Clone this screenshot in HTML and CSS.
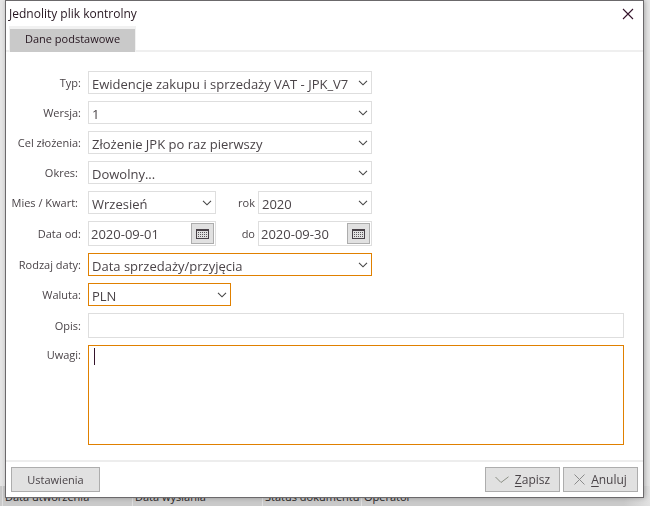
FILE: index.html
```html
<!DOCTYPE html>
<html lang="pl">
<head>
<meta charset="utf-8">
<title>Jednolity plik kontrolny</title>
<link rel="stylesheet" href="styles.css">
</head>
<body>
<svg class="defs" aria-hidden="true">
  <symbol id="chevron" viewBox="0 0 10 6"><path d="M1 .8 5 4.8 9 .8" fill="none" stroke="#454545" stroke-width="1.1"/></symbol>
  <symbol id="calendar" viewBox="0 0 13 10">
    <path fill="#494248" fill-rule="evenodd" d="M0 0H13V10H0ZM1 2V9H12V2Z"/>
    <path stroke="#5d585c" stroke-dasharray="1 1" d="M2 3.5H11M2 5.5H11M2 7.5H11"/>
  </symbol>
</svg>

<div class="backdrop">
  <div class="list-head">
    <span>Data utworzenia</span><span>Data wysłania</span><span>Status dokumentu</span><span>Operator</span>
  </div>
</div>

<form class="dialog" role="dialog" aria-labelledby="title">
  <header class="titlebar">
    <h1 id="title">Jednolity plik kontrolny</h1>
    <button class="close" type="button" aria-label="Zamknij">
      <svg width="12" height="12" viewBox="0 0 12 12"><path d="M1 1 11 11M11 1 1 11" stroke="#35142b" stroke-width="1.1"/></svg>
    </button>
  </header>
  <nav class="tabs"><button class="tab" type="button">Dane podstawowe</button></nav>

  <div class="fields">
    <label for="typ">Typ:</label>
    <div class="select wide"><select id="typ"><option>Ewidencje zakupu i sprzedaży VAT - JPK_V7</option></select><svg><use href="#chevron"/></svg></div>

    <label for="wersja">Wersja:</label>
    <div class="select wide"><select id="wersja"><option>1</option></select><svg><use href="#chevron"/></svg></div>

    <label for="cel">Cel złożenia:</label>
    <div class="select wide"><select id="cel"><option>Złożenie JPK po raz pierwszy</option></select><svg><use href="#chevron"/></svg></div>

    <label class="inset" for="okres">Okres:</label>
    <div class="select wide"><select id="okres"><option>Dowolny...</option></select><svg><use href="#chevron"/></svg></div>

    <label class="inset" for="mies">Mies / Kwart:</label>
    <div class="pair wide">
      <div class="select"><select id="mies"><option>Wrzesień</option></select><svg><use href="#chevron"/></svg></div>
      <label class="inset" for="rok">rok</label>
      <div class="select"><select id="rok"><option>2020</option></select><svg><use href="#chevron"/></svg></div>
    </div>

    <label for="od">Data od:</label>
    <div class="pair wide">
      <div class="date"><input id="od" type="text" value="2020-09-01"><button type="button" aria-label="Wybierz datę od"><svg><use href="#calendar"/></svg></button></div>
      <label class="inset" for="do">do</label>
      <div class="date"><input id="do" type="text" value="2020-09-30"><button type="button" aria-label="Wybierz datę do"><svg><use href="#calendar"/></svg></button></div>
    </div>

    <label for="rodzaj">Rodzaj daty:</label>
    <div class="select wide required"><select id="rodzaj"><option>Data sprzedaży/przyjęcia</option></select><svg><use href="#chevron"/></svg></div>

    <label for="waluta">Waluta:</label>
    <div class="select short required"><select id="waluta"><option>PLN</option></select><svg><use href="#chevron"/></svg></div>

    <label for="opis">Opis:</label>
    <input id="opis" class="text" type="text">

    <label class="top" for="uwagi">Uwagi:</label>
    <div class="notes required"><textarea id="uwagi"></textarea><span class="caret"></span></div>
  </div>

  <footer class="actions">
    <button class="btn settings" type="button">Ustawienia</button>
    <button class="btn" type="submit"><svg width="14" height="8" viewBox="0 0 14 8"><path d="M.5 1 6 6.5 13.5 .8" fill="none" stroke="#8b8f85"/></svg><span><u>Z</u>apisz</span></button>
    <button class="btn" type="button"><svg width="11" height="11" viewBox="0 0 11 11"><path d="M.5 .5 10.5 10.5M10.5 .5 .5 10.5" stroke="#8b8b8b"/></svg><span><u>A</u>nuluj</span></button>
  </footer>
</form>
</body>
</html>
```
FILE: styles.css
```css
* { box-sizing: border-box; }

body {
  margin: 0;
  background: #e6e6e6;
  color: #4a4448;
  font: 12px/16px "Open Sans", "Noto Sans", sans-serif;
}

button, input, select, textarea { font: inherit; color: inherit; }

.defs { position: absolute; width: 0; height: 0; }

/* Document list behind the dialog */
.backdrop {
  position: fixed;
  inset: 0;
  display: flex;
  flex-direction: column;
  justify-content: flex-end;
}

.list-head {
  display: grid;
  grid-template-columns: 130px 130px 99px 1fr;
  height: 20px;
  padding-left: 2px;
  background: linear-gradient(90deg, #cacaca 96%, #e2e2e2);
  font-size: 11px;
  line-height: 22px;
  color: #2c2828;
  white-space: nowrap;
}

.list-head span {
  padding-left: 2px;
  border-left: 1px solid #dedede;
}

.dialog {
  position: relative;
  display: flex;
  flex-direction: column;
  min-height: calc(100vh - 8px);
  margin: 0 6px 8px 5px;
  border: 1px solid #6b696b;
  background: #fff;
  box-shadow: 1px 0 5px #0004;
}

.titlebar {
  display: flex;
  align-items: center;
  justify-content: space-between;
  height: 25px;
  padding: 0 9px 0 3px;
  color: #25151f;
}

.titlebar h1 { margin: 0; font-size: 12px; font-weight: 400; }

.close {
  display: flex;
  padding: 0;
  border: 0;
  background: none;
}

.tabs {
  display: flex;
  height: 26px;
  padding-left: 3px;
  border-bottom: 2px solid #efefef;
}

.tab {
  height: 26px;
  padding: 0 15px 3px;
  border: 1px solid #f1f1f1;
  border-top-width: 3px;
  border-bottom: 0;
  background: #c9c9c9;
  color: #25151f;
  font-size: 11px;
}

.fields {
  display: grid;
  grid-template-columns: 75px 1fr;
  gap: 7px;
  align-items: center;
  padding: 19px 19px 14px 0;
}

.fields label {
  font-size: 11px;
  text-align: right;
  white-space: nowrap;
}

.fields .inset { padding-right: 3px; }
.fields .top { align-self: start; padding-top: 2px; }

.wide { width: 284px; }
.short { width: 143px; }

.select, .date, .text, .notes {
  border: 1px solid #dedede;
  background: #fff;
  font-size: 13px;
}

.select { position: relative; height: 23px; }

.fields .required { border-color: #e08000; }

.select select {
  display: block;
  width: 100%;
  height: 21px;
  padding: 2px 20px 0 3px;
  border: 0;
  outline: 0;
  appearance: none;
  background: none;
}

.select svg {
  position: absolute;
  top: 8px;
  right: 3px;
  width: 10px;
  height: 6px;
  pointer-events: none;
}

.pair {
  display: grid;
  grid-template-columns: 128px 1fr 114px;
  align-items: center;
}

.pair label { justify-self: end; }

.date { display: flex; height: 25px; padding: 1px; }

.date input {
  flex: 1;
  min-width: 0;
  padding: 0 1px;
  border: 0;
  outline: 0;
}

.date button {
  display: flex;
  align-items: center;
  justify-content: center;
  width: 23px;
  padding: 0;
  border: 1px solid #adadad;
  background: #e1e1e1;
}

.date svg { width: 13px; height: 10px; }

.text { width: 100%; height: 25px; padding: 0 3px; }

.notes { position: relative; height: 100px; }

.notes textarea {
  display: block;
  width: 100%;
  height: 100%;
  padding: 2px 5px;
  border: 0;
  outline: 0;
  resize: none;
  background: none;
}

.caret {
  position: absolute;
  top: 2px;
  left: 5px;
  width: 1px;
  height: 17px;
  background: #35142b;
}

.actions {
  display: flex;
  gap: 3px;
  margin-top: auto;
  padding: 5px;
  border-top: 2px solid #ededed;
}

.btn {
  display: flex;
  align-items: center;
  justify-content: center;
  gap: 6px;
  width: 75px;
  height: 25px;
  padding: 0;
  border: 1px solid #adadad;
  background: #e1e1e1;
  font-size: 12px;
}

.btn u { text-underline-offset: 2px; }

.settings { width: 89px; margin-right: auto; font-size: 11px; }
```
